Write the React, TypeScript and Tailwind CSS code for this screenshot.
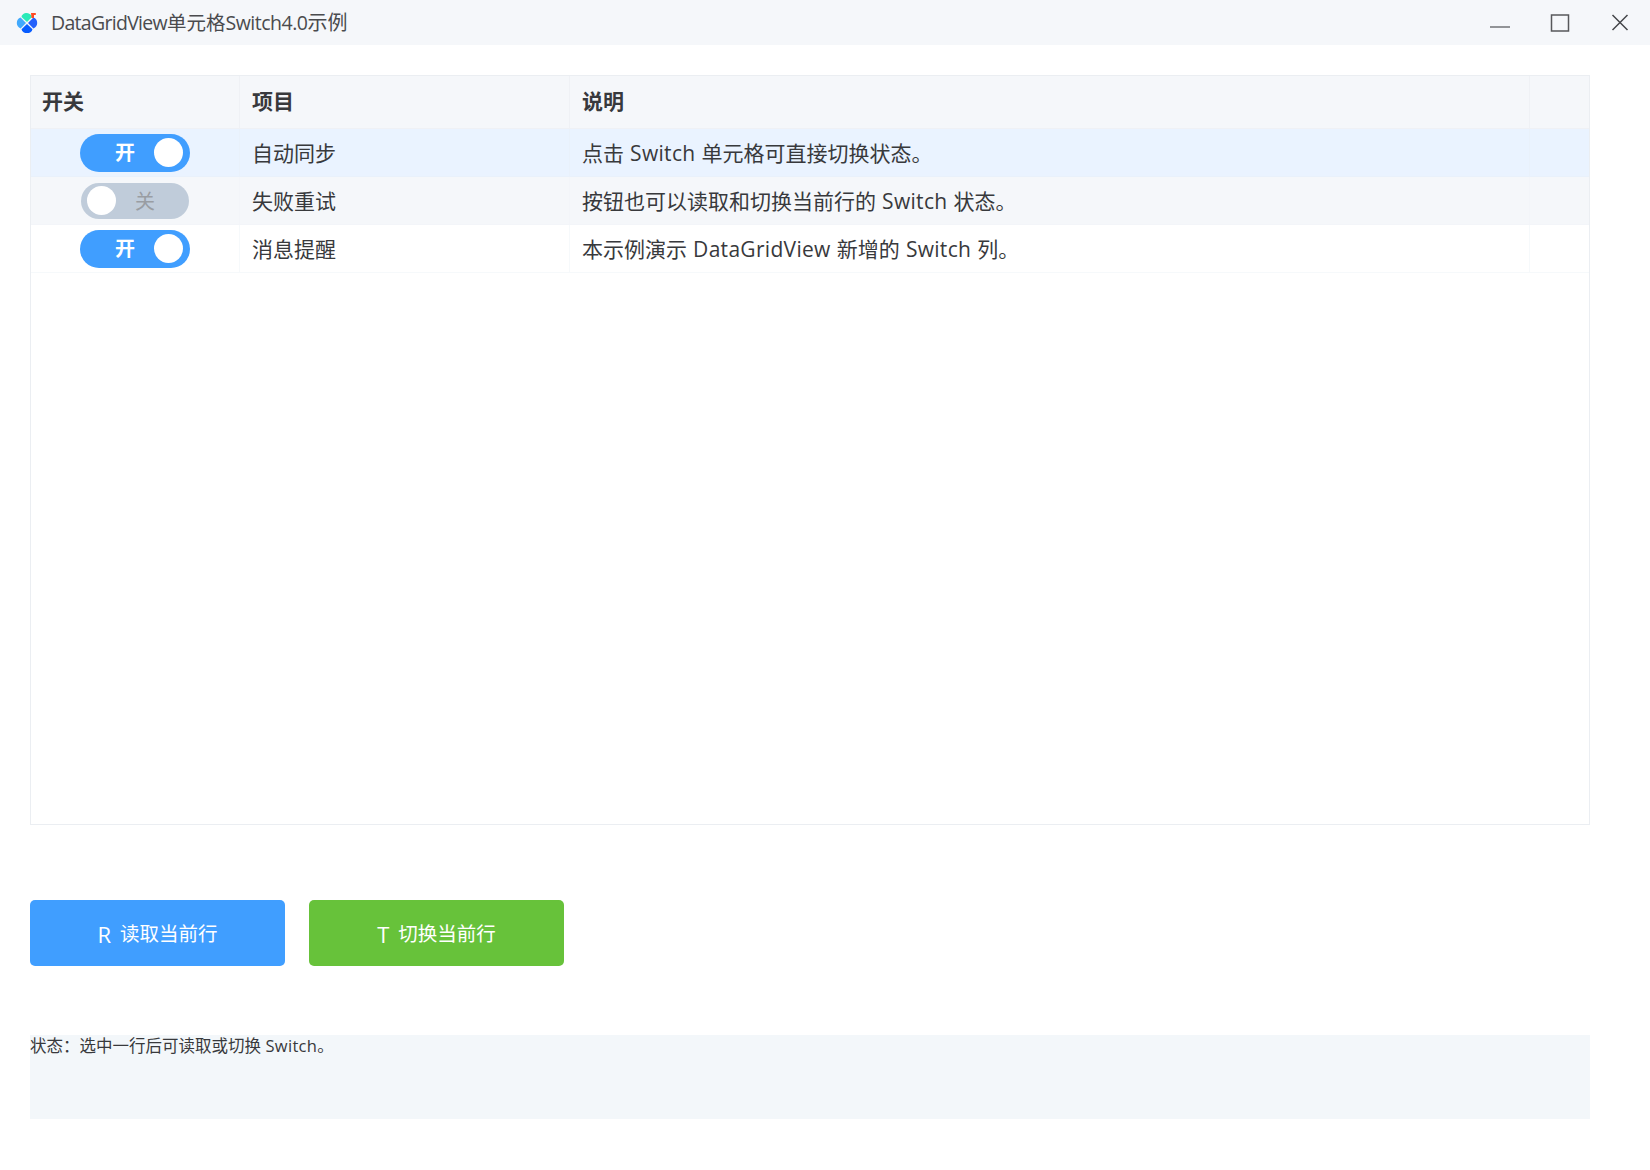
import React from "react";

type Row = { on: boolean; name: string; desc: React.ReactNode };

function Latin({ children }: { children: string }) {
  return <span className="font-['Open_Sans'] tracking-[0.3px]">{children}</span>;
}

const rows: Row[] = [
  { on: true, name: "自动同步", desc: <>点击 <Latin>Switch</Latin> 单元格可直接切换状态。</> },
  { on: false, name: "失败重试", desc: <>按钮也可以读取和切换当前行的 <Latin>Switch</Latin> 状态。</> },
  { on: true, name: "消息提醒", desc: <>本示例演示 <Latin>DataGridView</Latin> 新增的 <Latin>Switch</Latin> 列。</> },
];

const rowColors = ["bg-[#eaf3ff] border-[#e9f1fb]", "bg-[#f5f7fa] border-[#f3f5f9]", "bg-white border-[#f6f9fb]"];
const columns = "grid grid-cols-[209px_330px_960px_1fr]";

function AppLogo() {
  return (
    <svg width="22" height="22" viewBox="0 0 22 22">
      <path d="M11 10 5.500 5C5.600 2.500 8.500 1 10.500 1c2 0 4.600 1 5.500 4Z" fill="#29eab8" />
      <path d="m10 11-5.400 5.400C2.200 15.500.8 13.500.8 11c0-2.500 1.400-4.800 3.800-5.400Z" fill="#41a9fc" />
      <path d="m12 11 5.400-5.400c2.400.6 3.800 2.900 3.800 5.400s-1.400 4.500-3.800 5.400Z" fill="#2460fb" />
      <path d="m11 12 5.500 5.200c-.5 2.600-3 3.900-5.500 3.900s-5-1.300-5.500-3.900Z" fill="#075cff" />
      <path d="M15 1h4.800v2H18v3h-2.500Z" fill="#ff4a22" />
    </svg>
  );
}

function Switch({ on }: { on: boolean }) {
  return on ? (
    <div className="flex h-[38px] w-[110px] items-center justify-end rounded-full bg-[#409eff] pr-[7px]">
      <span className="mr-[19px] pb-px text-[20px] leading-none font-bold text-white">开</span>
      <span className="size-[29px] rounded-full bg-white" />
    </div>
  ) : (
    <div className="flex h-9 w-[108px] items-center rounded-full bg-[#c0ccda] pl-1.5">
      <span className="size-[29px] rounded-full bg-white" />
      <span className="ml-[19px] text-[20px] leading-none text-[#999da3]">关</span>
    </div>
  );
}

export default function App() {
  return (
    <div className="flex h-[1170px] w-[1650px] flex-col bg-white font-['Noto_Sans_CJK_SC',sans-serif] text-[#38393c]">
      <header className="flex h-[45px] shrink-0 items-center bg-[#f5f7fa] pl-4">
        <AppLogo />
        <h1 className="ml-[13px] text-[19.500px] leading-none whitespace-nowrap text-[#4a4b4e]">
          <span className="font-['Open_Sans'] tracking-[-0.7px]">DataGridView</span>单元格
          <span className="font-['Open_Sans'] tracking-[-0.5px]">Switch4.0</span>
          <span className="text-[20px]">示例</span>
        </h1>
        <div className="ml-auto flex">
          <span className="flex w-[60px] justify-center">
            <svg width="22" height="22" viewBox="0 0 22 22" stroke="#929497" strokeWidth="2"><path d="M1 15h20" /></svg>
          </span>
          <span className="flex w-[60px] justify-center">
            <svg width="22" height="22" viewBox="0 0 22 22" fill="none" stroke="#57585b" strokeWidth="1.500"><path d="M2.500 3h17v16h-17Z" /></svg>
          </span>
          <span className="flex w-[60px] justify-center">
            <svg width="22" height="22" viewBox="0 0 22 22" stroke="#45464a" strokeWidth="1.500"><path d="m3.500 3 15 15m0-15-15 15" /></svg>
          </span>
        </div>
      </header>

      <main className="flex flex-col items-start px-[30px] pt-[30px]">
        <section className="h-[750px] w-[1560px] border border-[#ebeef2] text-[21px] [word-spacing:1.4px]">
          <div className={`${columns} h-[53px] border-b border-[#eff1f5] bg-[#f5f7fa] leading-[49px] font-bold`}>
            <div className="border-r border-[#eff1f5] pl-[11px]">开关</div>
            <div className="border-r border-[#eff1f5] pl-3">项目</div>
            <div className="border-r border-[#eff1f5] pl-3">说明</div>
            <div />
          </div>
          {rows.map((row, i) => (
            <div key={row.name} className={`${columns} h-12 border-b leading-[46px] ${rowColors[i]}`}>
              <div className="flex items-center justify-center border-r border-inherit">
                <Switch on={row.on} />
              </div>
              <div className="border-r border-inherit pl-3">{row.name}</div>
              <div className="border-r border-inherit pl-3 whitespace-nowrap">{row.desc}</div>
              <div />
            </div>
          ))}
        </section>

        <div className="mt-[75px] flex gap-6 text-[19.500px] text-white">
          <button className="flex h-[66px] w-[255px] items-center justify-center gap-[9px] rounded-[5px] bg-[#409eff]">
            <span className="pt-0.5 font-['Open_Sans'] text-[22px]">R</span>
            <span className="pb-px">读取当前行</span>
          </button>
          <button className="flex h-[66px] w-[255px] items-center justify-center gap-[9px] rounded-[5px] bg-[#67c23a]">
            <span className="pt-0.5 font-['Open_Sans'] text-[22px]">T</span>
            <span className="pb-px">切换当前行</span>
          </button>
        </div>

        <footer className="mt-[69px] h-[84px] w-[1560px] bg-[#f3f7fa] text-[16.500px] leading-5 [word-spacing:0.8px]">
          状态：选中一行后可读取或切换 <Latin>Switch</Latin>。
        </footer>
      </main>
    </div>
  );
}
